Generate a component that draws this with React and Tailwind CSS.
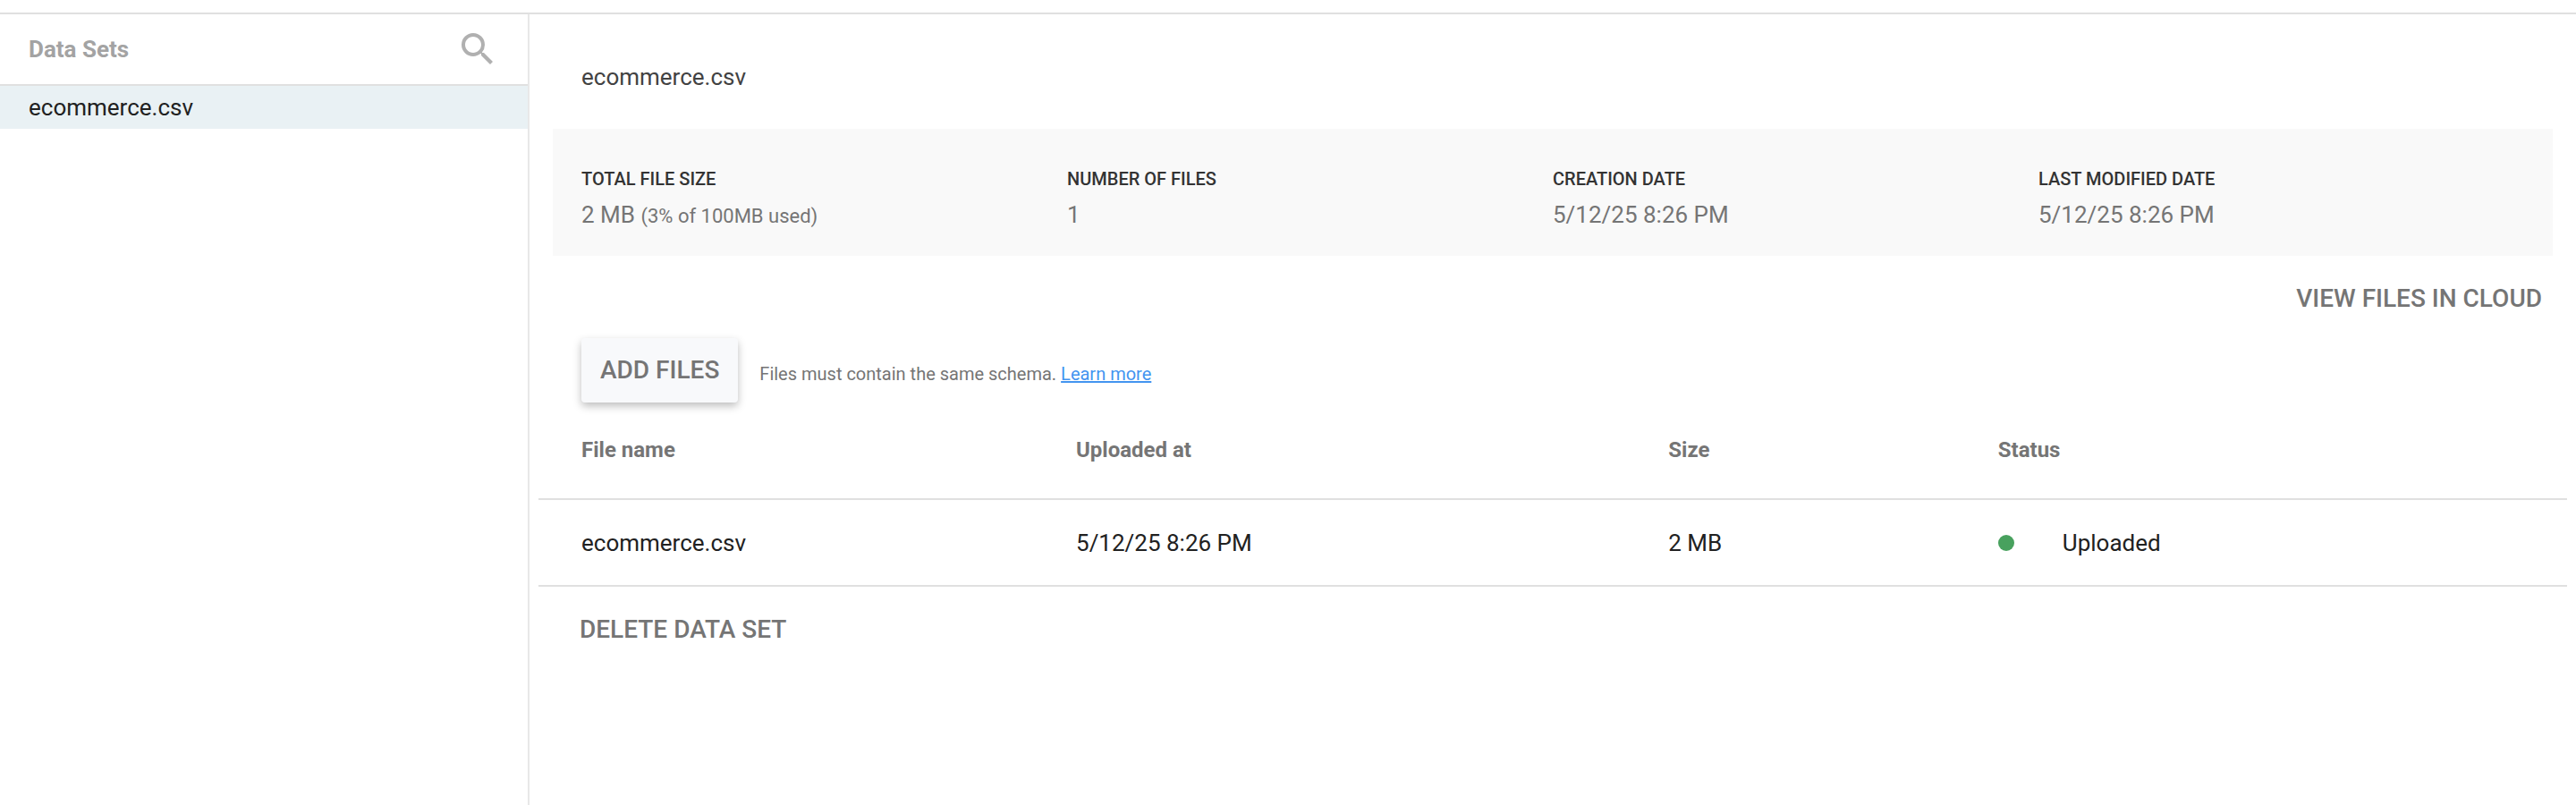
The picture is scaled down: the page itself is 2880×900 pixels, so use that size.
import { MdSearch } from "react-icons/md";

const dataSets = ["ecommerce.csv"];

const stats = [
  { label: "TOTAL FILE SIZE", value: "2 MB", note: "(3% of 100MB used)" },
  { label: "NUMBER OF FILES", value: "1" },
  { label: "CREATION DATE", value: "5/12/25 8:26 PM" },
  { label: "LAST MODIFIED DATE", value: "5/12/25 8:26 PM" },
];

const files = [
  { name: "ecommerce.csv", uploaded: "5/12/25 8:26 PM", size: "2 MB", status: "Uploaded" },
];

function Sidebar() {
  return (
    <aside className="w-[592px] shrink-0 border-r-2 border-[#e8e8e8]">
      <header className="flex h-20 items-center justify-between border-b-2 border-[#e0e0e0] px-8">
        <h2 className="text-[26px] leading-8 font-bold text-[#a3a3a3]">Data Sets</h2>
        <button type="button" aria-label="Search data sets" className="text-[#b0b0b0]">
          <MdSearch size={48} />
        </button>
      </header>
      <nav>
        {dataSets.map((name) => (
          <a key={name} href="#" className="block bg-[#e9f1f4] px-8 py-2 text-[26px] leading-8 text-[#212121]">
            {name}
          </a>
        ))}
      </nav>
    </aside>
  );
}

function Stats() {
  return (
    <dl className="mx-[26px] grid grid-cols-4 bg-[#f9f9f9] px-8 pt-10 pb-[30px]">
      {stats.map(({ label, value, note }) => (
        <div key={label}>
          <dt className="text-xl leading-8 font-medium text-[#333]">{label}</dt>
          <dd className="pt-2 text-[26px] leading-8 text-[#757575]">
            {value} {note && <span className="text-[22px] leading-none">{note}</span>}
          </dd>
        </div>
      ))}
    </dl>
  );
}

function FileTable() {
  return (
    <table className="mt-4 ml-[10px] w-[calc(100%-20px)] table-fixed border-separate border-spacing-0 text-left">
      <thead>
        <tr className="align-top text-2xl leading-8 text-[#757575]">
          <th className="h-[93px] w-[26.5%] border-b-2 border-[#e0e0e0] pt-[21px] pl-12 font-bold">File name</th>
          <th className="w-[29.2%] border-b-2 border-[#e0e0e0] pt-[21px] font-bold">Uploaded at</th>
          <th className="w-[16.25%] border-b-2 border-[#e0e0e0] pt-[21px] font-bold">Size</th>
          <th className="w-[28.05%] border-b-2 border-[#e0e0e0] pt-[21px] font-bold">Status</th>
        </tr>
      </thead>
      <tbody>
        {files.map((file) => (
          <tr key={file.name} className="text-[26px] leading-8 text-[#212121]">
            <td className="h-[97px] border-b-2 border-[#e0e0e0] pl-12">{file.name}</td>
            <td className="border-b-2 border-[#e0e0e0]">{file.uploaded}</td>
            <td className="border-b-2 border-[#e0e0e0]">{file.size}</td>
            <td className="border-b-2 border-[#e0e0e0]">
              <span className="flex items-center gap-[54px]">
                <span className="size-[18px] rounded-full bg-[#48a15e]" />
                {file.status}
              </span>
            </td>
          </tr>
        ))}
      </tbody>
    </table>
  );
}

export default function App() {
  return (
    <div className="flex min-h-screen flex-col bg-white pt-[14px] font-['Roboto',sans-serif]">
      <div className="flex grow border-t-2 border-[#e0e0e0]">
        <Sidebar />
        <main className="min-w-0 grow">
          <h1 className="px-[58px] pt-[54px] pb-[42px] text-[26px] leading-8 text-[#424242]">ecommerce.csv</h1>
          <Stats />
          <div className="flex justify-end pt-7 pr-[38px]">
            <button type="button" className="text-[28px] leading-10 font-medium text-[#757575]">
              VIEW FILES IN CLOUD
            </button>
          </div>
          <div className="flex items-center gap-6 px-[58px] pt-6">
            <button
              type="button"
              className="rounded bg-[#f8f9fb] px-[21px] py-4 text-[28px] leading-10 font-medium text-[#757575] shadow-[0_4px_10px_rgba(0,0,0,0.26)]"
            >
              ADD FILES
            </button>
            <p className="pt-2 text-xl leading-7 text-[#757575]">
              Files must contain the same schema.{" "}
              <a href="#" className="text-[#4394f0] underline">
                Learn more
              </a>
            </p>
          </div>
          <FileTable />
          <div className="px-14 pt-7">
            <button type="button" className="text-[28px] leading-10 font-medium text-[#757575]">
              DELETE DATA SET
            </button>
          </div>
        </main>
      </div>
    </div>
  );
}
